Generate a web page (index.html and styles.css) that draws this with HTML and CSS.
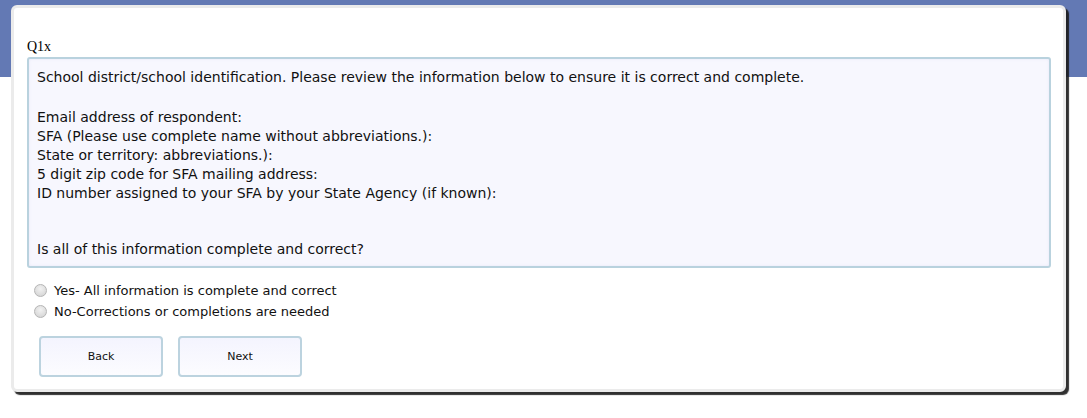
FILE: index.html
```html
<!DOCTYPE html>
<html lang="en">

<head>
  <meta charset="UTF-8">
  <meta name="viewport" content="width=device-width, initial-scale=1.0">
  <title>Survey - Q1x</title>
  <link rel="stylesheet" href="styles.css">
</head>

<body>
  <div class="card">
    <div class="question-label">Q1x</div>
    <div class="question-box">
      <p class="intro">School district/school identification. Please review the information below to ensure it is correct and complete.</p>
      <ul class="fields">
        <li>Email address of respondent:</li>
        <li>SFA (Please use complete name without abbreviations.):</li>
        <li>State or territory: abbreviations.):</li>
        <li>5 digit zip code for SFA mailing address:</li>
        <li>ID number assigned to your SFA by your State Agency (if known):</li>
      </ul>
      <p class="ask">Is all of this information complete and correct?</p>
    </div>

    <form class="answers">
      <label class="option"><input type="radio" name="q1x" value="yes"><span>Yes- All information is complete and correct</span></label>
      <label class="option"><input type="radio" name="q1x" value="no"><span>No-Corrections or completions are needed</span></label>
      <div class="nav">
        <button type="button">Back</button>
        <button type="button">Next</button>
      </div>
    </form>
  </div>
</body>

</html>
```

FILE: styles.css
```css
body {
  margin: 0;
  padding: 5px 0 0 11px;
  height: 418px;
  box-sizing: border-box;
  background: linear-gradient(#6379b4 0, #6379b4 77px, #fff 77px);
  font-family: Tahoma, 'DejaVu Sans', Verdana, sans-serif;
}

.card {
  width: 1024px;
  padding: 29px 12px 12px 13px;
  background-color: #fff;
  border: 3px solid #ebebeb;
  border-radius: 6px;
  box-shadow: 3px 3px 1px rgba(25, 25, 25, 0.9);
}

.question-label {
  font-family: 'Liberation Serif', 'Times New Roman', serif;
  font-size: 14px;
  line-height: 20px;
  color: #000;
}

.question-box {
  padding: 9px 8px 7px;
  border: 2px solid #b9d2de;
  border-radius: 3px;
  background-color: #f7f7fe;
  box-shadow: inset 0 0 3px #e6e6f8;
  font-family: 'DejaVu Sans', Tahoma, sans-serif;
  font-size: 14px;
  line-height: 19px;
  color: #111;
}

.intro {
  margin: 0 0 21px;
}

.fields {
  list-style: none;
  margin: 0;
  padding: 0;
}

.ask {
  margin: 37px 0 0;
}

.answers {
  margin: 0;
  padding-top: 12px;
}

.option {
  display: flex;
  align-items: center;
  height: 21px;
  font-family: 'DejaVu Sans', Tahoma, sans-serif;
  font-size: 13px;
  color: #111;
}

.option input {
  appearance: none;
  width: 13px;
  height: 13px;
  margin: 0 7px 0 7px;
  border: 1px solid #b5b5b5;
  border-radius: 50%;
  background: radial-gradient(circle at 50% 35%, #f2f2f2, #d0d0d0);
}

.nav {
  display: flex;
  gap: 15px;
  padding: 14px 0 0 12px;
}

.nav button {
  width: 124px;
  height: 41px;
  border: 2px solid #bcd3df;
  border-radius: 4px;
  background: linear-gradient(#f4f4fe, #fcfcff);
  font-family: 'DejaVu Sans', Tahoma, sans-serif;
  font-size: 11px;
  color: #111;
  cursor: pointer;
}
```
